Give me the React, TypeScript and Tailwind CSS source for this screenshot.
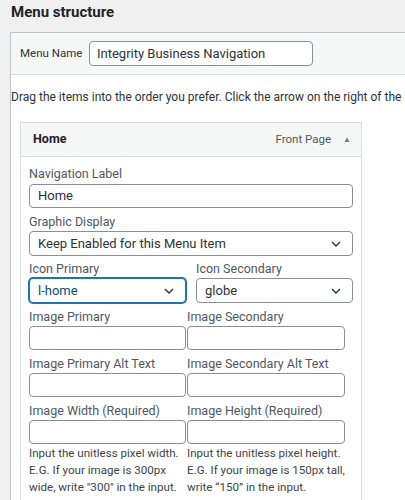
import type { ReactNode } from "react";

const font = { fontFamily: 'Roboto, "Liberation Sans", Arial, sans-serif' };

function Chevron() {
  return (
    <svg width="10" height="6" viewBox="0 0 10 6" className="absolute right-[11px] top-1/2 -translate-y-1/2">
      <path d="M1 1l4 4 4-4" fill="none" stroke="#2c3338" strokeWidth="1.4" />
    </svg>
  );
}

function Label({ children }: { children: ReactNode }) {
  return <div className="h-[18px] whitespace-nowrap text-[12.5px] leading-[18px] text-[#50575e]">{children}</div>;
}

function Input({ value, className = "" }: { value?: string; className?: string }) {
  return (
    <div
      className={`flex h-[24px] items-center rounded-[4px] border border-[#8c8f94] bg-white pl-[8px] text-[13px] text-[#2c3338] ${className}`}
    >
      {value}
    </div>
  );
}

function Select({ value, focused, className = "" }: { value: string; focused?: boolean; className?: string }) {
  return (
    <div
      className={`relative flex h-[25px] items-center rounded-[4px] border bg-white pl-[8px] text-[13px] ${
        focused
          ? "border-[#2271b1] text-[#0a4b78] shadow-[0_0_0_1px_#2271b1]"
          : "border-[#8c8f94] text-[#2c3338]"
      } ${className}`}
    >
      {value}
      <Chevron />
    </div>
  );
}

function Pair({ left, right }: { left: ReactNode; right: ReactNode }) {
  return (
    <div className="flex gap-[1px]">
      <div className="w-[157px]">{left}</div>
      <div className="w-[158px]">{right}</div>
    </div>
  );
}

function Help({ lines }: { lines: string[] }) {
  return (
    <div className="whitespace-nowrap text-[11.6px] leading-[17px] text-[#3c434a]">
      {lines.map((l) => (
        <div key={l}>{l}</div>
      ))}
    </div>
  );
}

export default function App() {
  return (
    <div className="h-[500px] w-[405px] overflow-hidden bg-[#f0f0f1]" style={font}>
      <h2 className="pl-[11px] pt-[2px] text-[15px] font-bold leading-[20px] text-[#1d2327]">Menu structure</h2>

      <div className="ml-[10px] mt-[10px] w-[420px] border-l border-t border-[#c3c4c7] bg-white">
        <div className="flex h-[42px] items-center border-b border-[#dcdcde] bg-[#f6f7f7] pl-[9px]">
          <span className="w-[69px] shrink-0 whitespace-nowrap text-[11.5px] text-[#2c3338]">Menu Name</span>
          <div className="flex h-[25px] w-[224px] items-center rounded-[4px] border border-[#8c8f94] bg-white pl-[7px] text-[13px] text-[#2c3338]">
            Integrity Business Navigation
          </div>
        </div>

        <p className="mt-[13px] whitespace-nowrap text-[12px] leading-[18px] text-[#2c3338]">
          Drag the items into the order you prefer. Click the arrow on the right of the item to reveal additional configuration options.
        </p>

        <div className="ml-[9px] mt-[16px] w-[342px] border border-[#dcdcde]">
          <div className="flex h-[34px] items-center border-b border-[#dcdcde] bg-[#f6f7f7] pl-[12px] pr-[10px]">
            <span className="text-[12.5px] font-bold text-[#1d2327]">Home</span>
            <span className="ml-auto text-[11.5px] text-[#50575e]">Front Page</span>
            <span className="ml-[12px] text-[8px] text-[#787c82]">▲</span>
          </div>

          <div className="pb-[20px] pl-[8px] pt-[8px]">
            <Label>Navigation Label</Label>
            <Input value="Home" className="mt-[1px] w-[324px]" />

            <div className="mt-[5px]">
              <Label>Graphic Display</Label>
              <Select value="Keep Enabled for this Menu Item" className="w-[324px]" />
            </div>

            <div className="mt-[4px] flex gap-[10px]">
              <div className="w-[157px]">
                <Label>Icon Primary</Label>
                <Select value="l-home" focused />
              </div>
              <div className="w-[157px]">
                <Label>Icon Secondary</Label>
                <Select value="globe" />
              </div>
            </div>

            <div className="mt-[5px]">
              <Pair left={<><Label>Image Primary</Label><Input /></>} right={<><Label>Image Secondary</Label><Input /></>} />
            </div>
            <div className="mt-[5px]">
              <Pair
                left={<><Label>Image Primary Alt Text</Label><Input /></>}
                right={<><Label>Image Secondary Alt Text</Label><Input /></>}
              />
            </div>
            <div className="mt-[5px]">
              <Pair
                left={<><Label>Image Width (Required)</Label><Input /></>}
                right={<><Label>Image Height (Required)</Label><Input /></>}
              />
            </div>
            <div className="mt-[1px]">
              <Pair
                left={<Help lines={["Input the unitless pixel width.", "E.G. If your image is 300px", 'wide, write "300" in the input.']} />}
                right={<Help lines={["Input the unitless pixel height.", "E.G. If your image is 150px tall,", "write \u201c150\u201d in the input."]} />}
              />
            </div>
          </div>
        </div>
      </div>
    </div>
  );
}
